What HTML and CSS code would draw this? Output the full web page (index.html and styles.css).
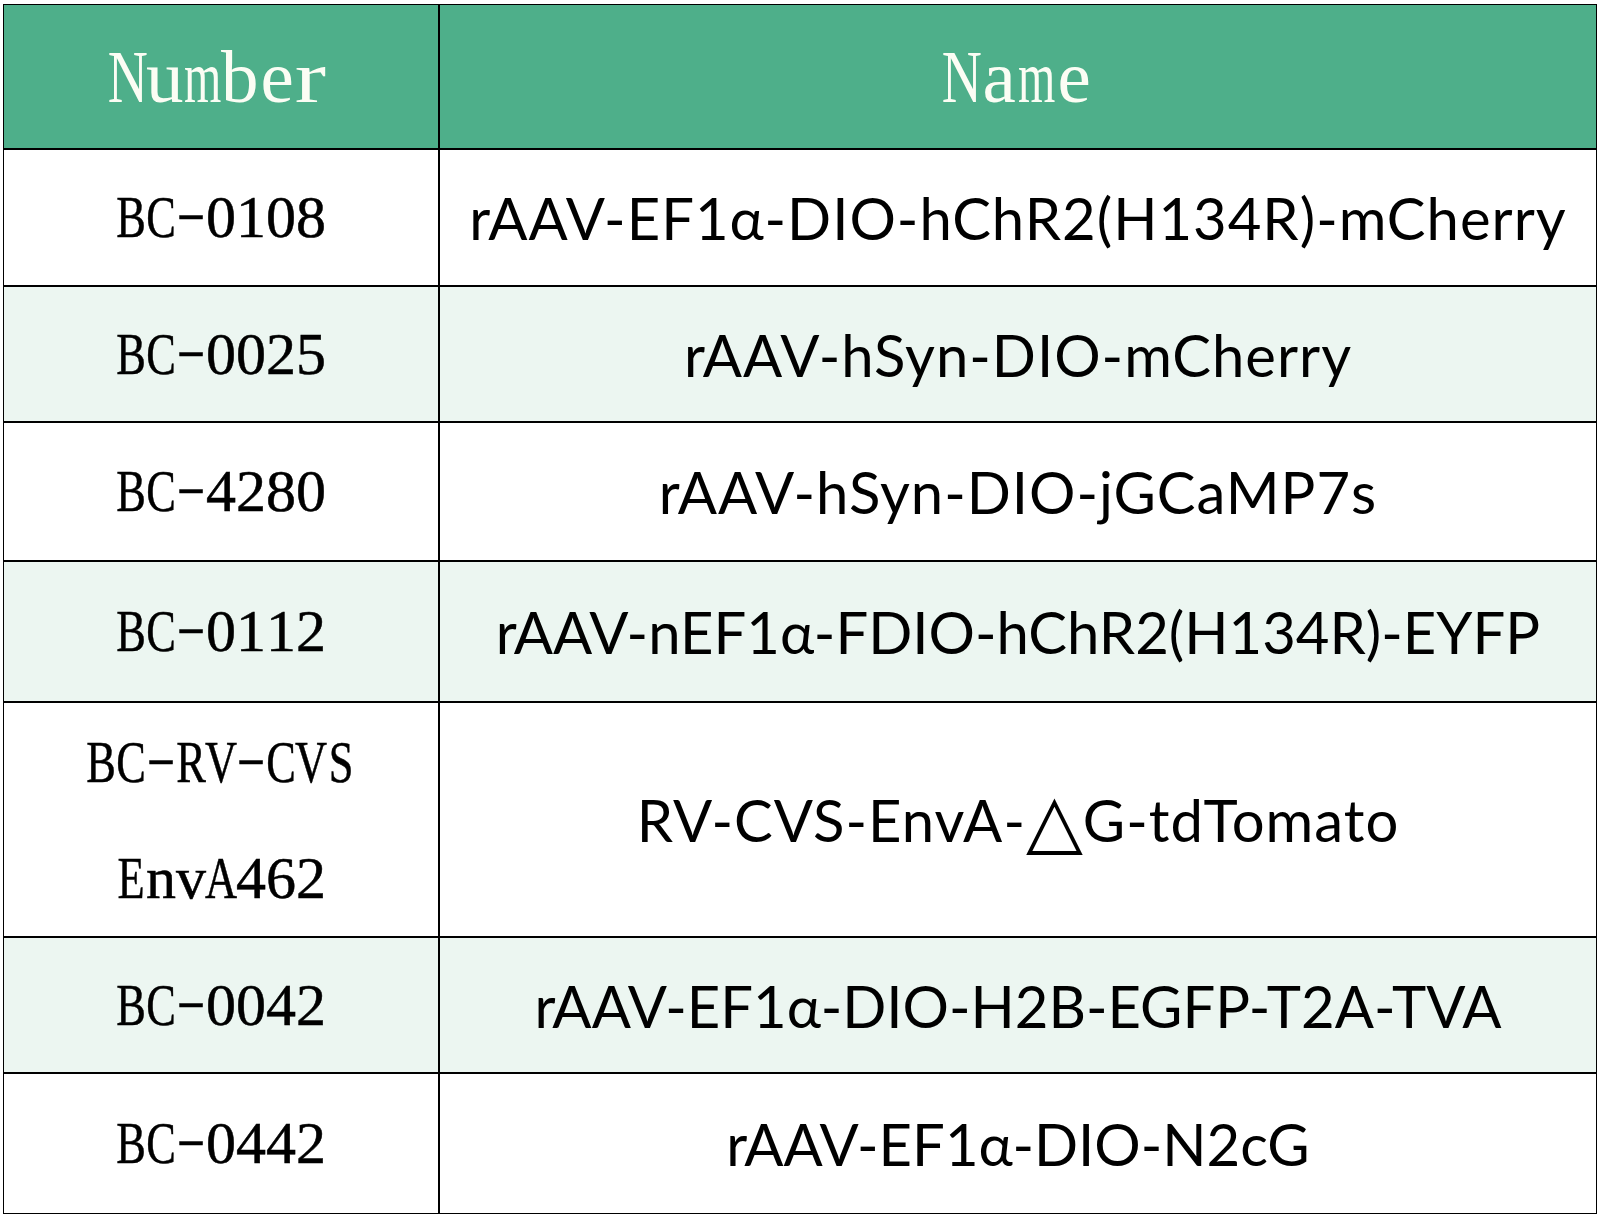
FILE: index.html
```html
<!DOCTYPE html>
<html lang="en">
<head>
<meta charset="utf-8">
<title>Virus list</title>
<link rel="stylesheet" href="styles.css">
</head>
<body>
<div class="table">
  <div class="cell head"><span class="c u">N</span><span class="c">u</span><span class="c w">m</span><span class="c">b</span><span class="c">e</span><span class="c r">r</span></div>
  <div class="cell head"><span class="c u">N</span><span class="c">a</span><span class="c w">m</span><span class="c">e</span></div>

  <div class="cell num"><span class="c u">B</span><span class="c u">C</span><span class="c d">-</span><span class="c">0</span><span class="c">1</span><span class="c">0</span><span class="c">8</span></div>
  <div class="cell name">rAAV-EF1α-DIO-hChR2(H134R)-mCherry</div>

  <div class="cell num alt"><span class="c u">B</span><span class="c u">C</span><span class="c d">-</span><span class="c">0</span><span class="c">0</span><span class="c">2</span><span class="c">5</span></div>
  <div class="cell name alt">rAAV-hSyn-DIO-mCherry</div>

  <div class="cell num"><span class="c u">B</span><span class="c u">C</span><span class="c d">-</span><span class="c">4</span><span class="c">2</span><span class="c">8</span><span class="c">0</span></div>
  <div class="cell name">rAAV-hSyn-DIO-jGCaMP7s</div>

  <div class="cell num alt"><span class="c u">B</span><span class="c u">C</span><span class="c d">-</span><span class="c">0</span><span class="c">1</span><span class="c">1</span><span class="c">2</span></div>
  <div class="cell name alt caps">rAAV-nEF1α-FDIO-hChR2(H134R)-EYFP</div>

  <div class="cell num two"><div class="lines"><div><span class="c u">B</span><span class="c u">C</span><span class="c d">-</span><span class="c u">R</span><span class="c u">V</span><span class="c d">-</span><span class="c u">C</span><span class="c u">V</span><span class="c u">S</span></div><div><span class="c u">E</span><span class="c">n</span><span class="c">v</span><span class="c u">A</span><span class="c">4</span><span class="c">6</span><span class="c">2</span></div></div></div>
  <div class="cell name">RV-CVS-EnvA-<span class="tri">△</span>G-tdTomato</div>

  <div class="cell num alt"><span class="c u">B</span><span class="c u">C</span><span class="c d">-</span><span class="c">0</span><span class="c">0</span><span class="c">4</span><span class="c">2</span></div>
  <div class="cell name alt caps">rAAV-EF1α-DIO-H2B-EGFP-T2A-TVA</div>

  <div class="cell num"><span class="c u">B</span><span class="c u">C</span><span class="c d">-</span><span class="c">0</span><span class="c">4</span><span class="c">4</span><span class="c">2</span></div>
  <div class="cell name caps">rAAV-EF1α-DIO-N2cG</div>
</div>
</body>
</html>
```
FILE: styles.css
```css
html, body {
  margin: 0;
  padding: 0;
  background: #ffffff;
}

body {
  padding: 4px 0 0 3px;
}

.table {
  width: 1594px;
  box-sizing: border-box;
  background: #000000;
  padding: 1px;
  display: grid;
  grid-template-columns: 434px 1156px;
  grid-template-rows: 143px 135px 134px 137px 139px 233px 134px 139px;
  gap: 2px;
}

.cell {
  background: #ffffff;
  display: flex;
  align-items: center;
  justify-content: center;
  text-align: center;
  color: #000000;
  white-space: nowrap;
}

.cell.alt {
  background: #ecf6f1;
}

.cell.head {
  background: #4eaf8a;
  color: #fbfdf4;
  font-family: "Liberation Serif", "DejaVu Serif", serif;
  font-size: 75px;
}

.num {
  font-family: "Liberation Serif", "DejaVu Serif", serif;
  font-size: 60px;
  -webkit-text-stroke: 0.5px #000000;
}

.lines {
  line-height: 116px;
}

/* monospaced half-width character cells, like a CJK serif font */
.c {
  display: inline-flex;
  justify-content: center;
  width: 0.5em;
}

.c.u {
  transform: scaleX(0.74);
}

.c.w {
  transform: scaleX(0.64);
}

.c.r {
  transform: translateX(-0.06em) scaleX(1.25);
}

.c.d {
  transform: translateY(-0.07em) scaleX(1.45) scaleY(0.8);
}

.name {
  font-family: Lato, "Open Sans", sans-serif;
  font-size: 58px;
  letter-spacing: 1px;
}

.name.caps {
  letter-spacing: 0;
}

.tri {
  font-family: "DejaVu Sans", sans-serif;
  font-size: 74px;
  letter-spacing: 0;
  line-height: 1;
}
```
